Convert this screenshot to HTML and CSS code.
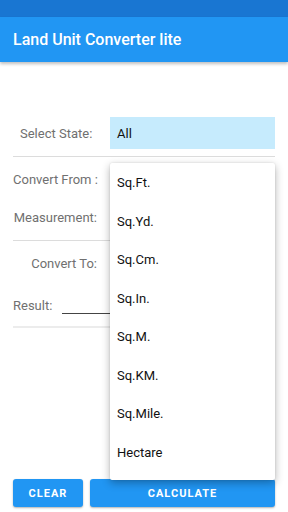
FILE: index.html
```html
<!DOCTYPE html>
<html lang="en">
<head>
    <meta charset="UTF-8">
    <meta name="viewport" content="width=device-width, initial-scale=1.0">
    <title>Land Unit Converter lite</title>
    <link rel="stylesheet" href="styles.css">
</head>
<body>
    <div class="statusBar"></div>
    <div class="appBar">Land Unit Converter lite</div>

    <div id="form">
        <div class="row selectRow">
            <span class="label stateLabel">Select State:</span>
            <div class="stateBox">All</div>
        </div>
        <div class="divider"></div>

        <div class="row fromRow">
            <span class="label rightLabel">Convert From :</span>
        </div>
        <div class="row measureRow">
            <span class="label rightLabel">Measurement:</span>
        </div>
        <div class="divider"></div>

        <div class="row toRow">
            <span class="label rightLabel">Convert To:</span>
        </div>
        <div class="row resultRow">
            <span class="label resultLabel">Result:</span>
            <div class="resultLine"></div>
        </div>
        <div class="divider thick"></div>
    </div>

    <div class="buttons">
        <button class="btn clearBtn">Clear</button>
        <button class="btn calcBtn">Calculate</button>
    </div>

    <!-- open spinner menu -->
    <ul class="dropdown">
        <li>Sq.Ft.</li>
        <li>Sq.Yd.</li>
        <li>Sq.Cm.</li>
        <li>Sq.In.</li>
        <li>Sq.M.</li>
        <li>Sq.KM.</li>
        <li>Sq.Mile.</li>
        <li>Hectare</li>
    </ul>
</body>
</html>
```

FILE: styles.css
```css
html, body {
  margin: 0;
  padding: 0;
}

body {
  position: relative;
  width: 288px;
  height: 512px;
  display: flex;
  flex-direction: column;
  font-family: Roboto, "Noto Sans", sans-serif;
  background: #fff;
  overflow: hidden;
}

.statusBar {
  height: 17px;
  background-color: #1976D2;
}

.appBar {
  height: 45px;
  display: flex;
  align-items: center;
  padding-left: 13px;
  background-color: #2196F3;
  color: #fff;
  font-size: 16px;
  font-weight: 500;
  box-shadow: 0 2px 3px rgba(0, 0, 0, 0.25);
  position: relative;
  z-index: 1;
}

#form {
  padding: 0 13px;
}

.row {
  display: flex;
  align-items: center;
  height: 22px;
}

.label {
  font-size: 13px;
  color: #707070;
  white-space: nowrap;
}

.rightLabel {
  width: 84px;
  text-align: right;
}

.selectRow {
  margin-top: 55px;
  height: 32px;
}

.stateLabel {
  padding-left: 7px;
  width: 90px;
}

.stateBox {
  flex: 1;
  height: 32px;
  display: flex;
  align-items: center;
  padding-left: 7px;
  background-color: #C6EBFD;
  color: #111;
  font-size: 13px;
}

.divider {
  height: 1px;
  background-color: #dcdcdc;
  margin-top: 7px;
}

.fromRow {
  margin-top: 11px;
}

.measureRow {
  margin-top: 16px;
}

.measureRow + .divider {
  margin-top: 12px;
}

.toRow {
  margin-top: 11px;
}

.resultRow {
  margin-top: 20px;
}

.resultLine {
  width: 60px;
  height: 1px;
  margin-left: 10px;
  margin-top: 16px;
  background-color: #444;
}

.divider.thick {
  height: 2px;
  margin-top: 10px;
  background-color: #ececec;
}

.buttons {
  margin-top: auto;
  margin-bottom: 5px;
  padding: 0 13px;
  display: flex;
  gap: 7px;
}

.btn {
  height: 28px;
  border: none;
  border-radius: 3px;
  background-color: #2196F3;
  color: #fff;
  font-family: Roboto, sans-serif;
  font-size: 11px;
  font-weight: 700;
  letter-spacing: 1px;
  text-transform: uppercase;
  box-shadow: 0 1px 2px rgba(0, 0, 0, 0.3);
}

.clearBtn {
  width: 70px;
}

.calcBtn {
  flex: 1;
}

/* popup list of the spinner */
.dropdown {
  position: absolute;
  left: 110px;
  top: 163px;
  width: 165px;
  margin: 0;
  padding: 1px 0 8px 0;
  list-style: none;
  background: #fff;
  border-radius: 2px;
  box-shadow: 0 3px 8px rgba(0, 0, 0, 0.3), 0 0 2px rgba(0, 0, 0, 0.12);
  z-index: 2;
}

.dropdown li {
  height: 38.5px;
  line-height: 38.5px;
  padding-left: 7px;
  font-size: 13px;
  color: #111;
}
```
